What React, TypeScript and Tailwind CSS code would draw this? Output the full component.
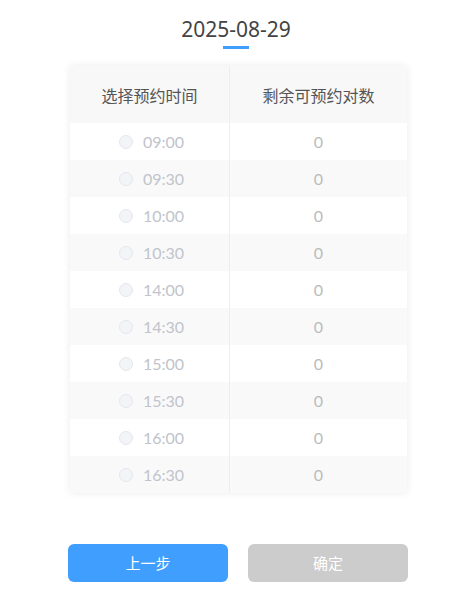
const slots = ['09:00', '09:30', '10:00', '10:30', '14:00', '14:30', '15:00', '15:30', '16:00', '16:30'];

export default function App() {
  return (
    <div className="min-h-[603px] w-[472px] bg-white font-['Lato','Noto_Sans_CJK_SC',sans-serif]">
      <div className="flex flex-col items-center pt-[14px]">
        <h1 className="font-['Noto_Sans','Noto_Sans_CJK_SC',sans-serif] text-[21px] leading-[30px] text-[#444]">
          2025-08-29
        </h1>
        <div className="mt-[2px] h-[3px] w-[26px] bg-[#409eff]" />
      </div>

      {/* time slot table */}
      <div className="ml-[70px] mt-[17px] w-[337px] shadow-[0_0_8px_rgba(0,0,0,0.08)]">
        <div className="flex h-[57px] bg-[#f8f8f8] text-[16px] text-[#555] font-['Noto_Sans_CJK_SC',sans-serif]">
          <div className="flex w-[160px] items-center justify-center border-r border-[#eee]">选择预约时间</div>
          <div className="flex flex-1 items-center justify-center">剩余可预约对数</div>
        </div>
        {slots.map((t, i) => (
          <div key={t} className={`flex h-[37px] ${i % 2 ? 'bg-[#f9f9f9]' : 'bg-white'}`}>
            <div className="flex w-[160px] items-center justify-center gap-[10px] border-r border-[#eee] pl-[4px]">
              <span className="h-[14px] w-[14px] rounded-full border border-[#e4e7ed] bg-[#f2f4f8]" />
              <span className="text-[16px] text-[#c0c4cc]">{t}</span>
            </div>
            <div className="flex flex-1 items-center justify-center text-[16px] text-[#bbb]">0</div>
          </div>
        ))}
      </div>

      <div className="ml-[68px] mt-[51px] flex w-[340px] gap-[20px] font-['Noto_Sans_CJK_SC',sans-serif] text-[15px] text-white">
        <button className="h-[38px] flex-1 rounded-[6px] bg-[#409eff]">上一步</button>
        <button className="h-[38px] flex-1 rounded-[6px] bg-[#cccccc]">确定</button>
      </div>
    </div>
  );
}
